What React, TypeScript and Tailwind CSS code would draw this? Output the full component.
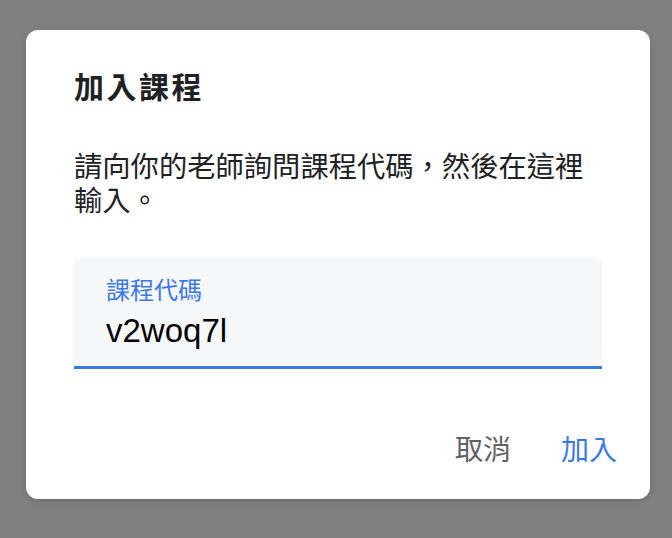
import React from 'react';

const font = { fontFamily: '"Noto Sans CJK TC", "Liberation Sans", sans-serif' };

export default function App() {
  return (
    <div
      className="w-[672px] h-[538px] bg-[#808080] pt-[30px] pl-[26px]"
      style={font}
    >
      <div className="w-[624px] h-[469px] bg-white rounded-[12px] shadow-[0_2px_6px_rgba(0,0,0,0.15)] flex flex-col">
        <div className="px-12 pt-[36px]">
          {/* Title */}
          <h2 className="text-[30px] leading-[38px] font-bold tracking-[2.5px] text-[#202124]">
            加入課程
          </h2>

          {/* Description */}
          <p className="mt-[44px] text-[28.3px] leading-[34px] text-[#202124]">
            請向你的老師詢問課程代碼，然後在這裡輸入。
          </p>

          {/* Course code field */}
          <div className="mt-[42px] h-[111px] bg-[#f6f7f9] rounded-t-[6px] border-b-[3px] border-[#3b78e7] pl-8 pt-[17px]">
            <div className="text-[24px] leading-[28px] text-[#3b78e7]">課程代碼</div>
            <div
              className="mt-2 text-[33px] leading-[40px] text-black"
              style={{ fontFamily: '"Liberation Sans", "Noto Sans CJK TC", sans-serif' }}
            >
              v2woq7l
            </div>
          </div>
        </div>

        {/* Actions */}
        <div className="mt-[59px] flex justify-end gap-[34px] pr-[25px]">
          <button className="px-2 text-[28px] leading-[40px] text-[#5f6368]">取消</button>
          <button className="px-2 text-[28px] leading-[40px] text-[#3b78e7]">加入</button>
        </div>
      </div>
    </div>
  );
}
